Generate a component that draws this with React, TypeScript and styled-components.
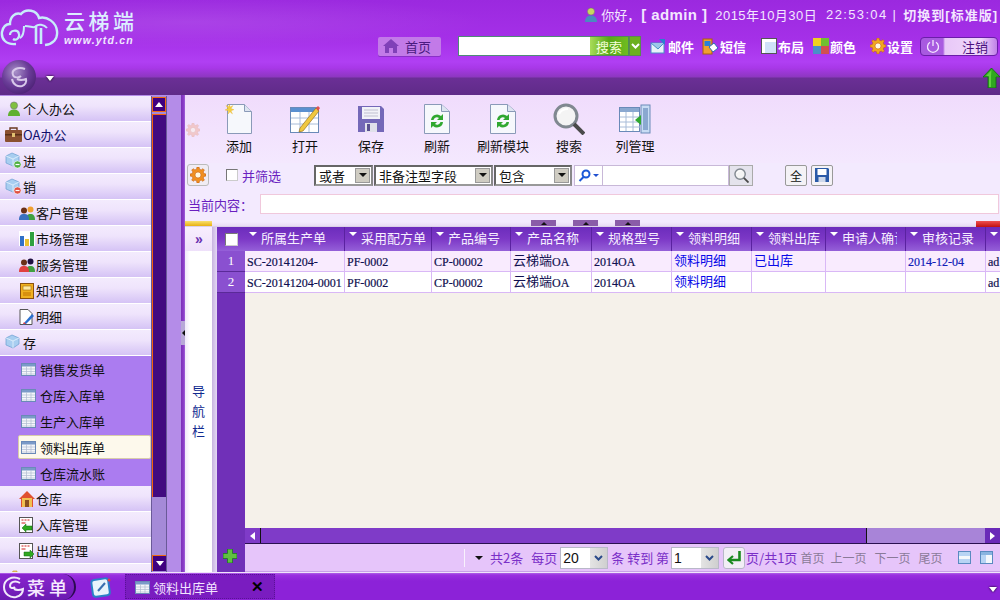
import React from "react";
import styled, { createGlobalStyle } from "styled-components";

const CJK = `"Noto Sans CJK SC", "Liberation Sans", sans-serif`;

const Global = createGlobalStyle`
  html, body { margin: 0; padding: 0; width: 1000px; height: 600px; overflow: hidden; }
  body { font-family: ${CJK}; font-size: 13px; }
  * { box-sizing: border-box; }
`;

const Page = styled.div`
  width: 1000px; height: 600px; display: flex; flex-direction: column; overflow: hidden;
`;

/* ---------- header ---------- */
const Header = styled.header`
  height: 95px; flex: none; display: flex; flex-direction: column;
  background:
    radial-gradient(ellipse 300px 26px at 190px 22px, rgba(255,255,255,.10), rgba(255,255,255,0) 100%),
    linear-gradient(#9b29df 0, #a530e8 40px, #b03ff3 62px, #a838e8 68px, #8d37c0 77px, #6b2f96 78px, #5f2b88 95px);
`;
const TopRow = styled.div`height: 60px; display: flex; flex: none;`;
const Logo = styled.div`width: 378px; flex: none; display: flex; padding: 8px 0 0 0; align-items: flex-start;`;
const LogoText = styled.div`margin-left: 4px; display: flex; flex-direction: column; color: #e8f4ff;`;
const LogoName = styled.span`font-size: 21px; line-height: 24px; letter-spacing: 3.5px; color: #dcefff; font-weight: 500; margin-bottom: 3px;`;
const LogoUrl = styled.span`font: italic bold 10.5px/11px "Liberation Sans", sans-serif; letter-spacing: 1.2px; color: #f0e8ff;`;
const TopRight = styled.div`flex: 1; display: flex; flex-direction: column; position: relative;`;
const InfoLine = styled.div`
  height: 25px; padding-top: 4px; display: flex; align-items: center; justify-content: flex-end; padding-right: 2px;
  color: #f3e6ff; font-size: 13px; white-space: nowrap;
`;
const InfoBold = styled.b<{ $l?: number; $size?: number; $ls?: number }>`
  margin-left: ${p => p.$l ?? 0}px; font-size: ${p => p.$size ?? 13}px; letter-spacing: ${p => p.$ls ?? 0}px;
  font-family: "Liberation Sans", ${CJK}; font-weight: 700;
`;
const InfoPlain = styled.span<{ $l?: number; $ls?: number }>`
  margin-left: ${p => p.$l ?? 0}px; font-family: "Liberation Sans", ${CJK}; letter-spacing: ${p => p.$ls ?? 0.45}px;
`;
const ToolLine = styled.div`height: 24px; margin-top: 9px; display: flex; align-items: center;`;
const HomeBtn = styled.div`
  width: 63px; height: 19px; display: flex; align-items: center; padding-left: 5px; gap: 6px;
  background: #c27ae8; border-radius: 2px; color: #4a1a80; font-size: 13px; box-shadow: 0 1px 0 #8a30c8;
`;
const SearchBox = styled.div`margin-left: 17px; width: 132px; height: 20px; background: #fff; border: 1px solid #4f8a78; border-right: 0;`;
const SearchBtn = styled.div`
  width: 39px; height: 20px; background: linear-gradient(90deg,#a8dc58,#58a818 50%,#70bc20);
  color: #f4ffd8; font-size: 13px; line-height: 19px; text-align: center; border: 1px solid #4f8a58; border-left: 0;
`;
const SearchDrop = styled.div`
  width: 12px; height: 20px; background: #6cb020; border: 1px solid #5a8a50; color: #fff;
  display: flex; align-items: center; justify-content: center;
`;
const ToolLink = styled.div<{ $l: number }>`
  margin-left: ${p => p.$l}px; display: flex; align-items: center; gap: 1px;
  color: #fff; font-size: 13px; font-weight: 700; white-space: nowrap;
`;
const Logout = styled.div`
  margin-left: 7px; width: 78px; height: 19px; border-radius: 4px; border: 1px solid #6a1ea8;
  background: linear-gradient(90deg,#a85ae0 0 22px,#e8c8f8 24px,#f0d8fa 60px,#c080e8);
  display: flex; align-items: center; color: #4a1080; padding-left: 5px;
`;
const LogoutLabel = styled.span`margin-left: 22px;`;
const NavRow = styled.div`flex: 1; display: flex; align-items: flex-start; justify-content: space-between; padding-left: 2px;`;
const Orb = styled.div`
  width: 34px; height: 34px; border-radius: 50%; flex: none; display: flex; align-items: center; justify-content: center;
  background: radial-gradient(circle at 40% 35%, #a890c8 0, #6a3c98 45%, #3a1260 100%);
`;
const NavLeft = styled.div`display: flex; align-items: flex-start;`;
const SmallDown = styled.span<{ $m?: string }>`
  width: 0; height: 0; display: block; margin: ${p => p.$m ?? "0"};
  border-left: 4px solid transparent; border-right: 4px solid transparent; border-top: 5px solid #fff;
  filter: drop-shadow(0 0 1px #000);
`;
const UpArrowWrap = styled.div`margin-top: 8px; height: 20px;`;

/* ---------- body ---------- */
const Body = styled.div`flex: 1; min-height: 0; display: flex;`;
const Side = styled.aside`
  width: 185px; flex: none; display: flex; position: relative; background: #b48ce8; padding-top: 1px;
`;
const Menu = styled.nav`width: 151px; flex: none; overflow: hidden; display: flex; flex-direction: column;`;
const MenuRow = styled.div<{ $sub?: boolean }>`
  height: 26px; flex: none; display: flex; align-items: center;
  padding-left: ${p => (p.$sub ? 18 : 5)}px; gap: 1px;
  background: linear-gradient(#f3ebfd, #efe4fc 40%, #d5c3f5);
  border-bottom: 1px solid #fff; color: #111; font-size: 13px; white-space: nowrap;
`;
const OaText = styled.span`color: #10106a;`;
const IconBox = styled.span`width: 17px; height: 18px; flex: none; display: inline-flex; align-items: center; justify-content: center;`;
const SubBlock = styled.div`height: 130px; flex: none; background: #ab7cf0; display: flex; flex-direction: column;`;
const SubRow = styled.div<{ $active?: boolean }>`
  height: 26px; flex: none; display: flex; align-items: center; padding-left: 3px; gap: 4px; margin-left: 18px;
  color: #111; font-size: 13px;
  ${p => p.$active && `background: #fdf9ec; border: 1px solid #d8ccaa; border-radius: 2px; height: 24px; margin: 1px 0 1px 18px; padding-left: 2px;`}
`;
const Scroll = styled.div`
  width: 16px; flex: none; display: flex; flex-direction: column; background: #a58ad8; height: 476px;
  border-left: 1px solid #6a5a98; border-right: 1px solid #6a5a98;
`;
const ScrollUp = styled.div`
  height: 15px; margin-top: 1px; background: #400080; border: 1px solid #f06a10;
  display: flex; align-items: center; justify-content: center;
`;
const ScrollThumb = styled.div`height: 383px; margin-top: 2px; background: #420a80; border-left: 1px solid #f8600c; border-top: 1px solid #f8600c;`;
const ScrollDown = styled.div`
  height: 16px; margin-top: auto; margin-bottom: 1px; background: #400080; border-left: 1px solid #f06a10; border-top: 1px solid #f06a10;
  display: flex; align-items: center; justify-content: center;
`;
const TriUp = styled.span`
  width: 0; height: 0; border-left: 4px solid transparent; border-right: 4px solid transparent; border-bottom: 5px solid #fff; display: block;
`;
const TriDown = styled.span`
  width: 0; height: 0; border-left: 4px solid transparent; border-right: 4px solid transparent; border-top: 5px solid #fff; display: block;
`;
const SideStrip = styled.div`width: 14px; flex: none;`;
const SideEdge = styled.div`width: 4px; flex: none; background: linear-gradient(90deg,#7a30b8,#8a3cc8 60%,#a060d8); margin-top: -1px;`;
const Collapse = styled.div`
  position: absolute; left: 181px; top: 226px; width: 4px; height: 24px; background: #b8a8d8;
  display: flex; align-items: center; justify-content: flex-end;
`;
const CollapseTri = styled.span`
  width: 0; height: 0; border-top: 3px solid transparent; border-bottom: 3px solid transparent; border-right: 3px solid #111; display: block;
`;

const Main = styled.main`flex: 1; min-width: 0; display: flex; flex-direction: column; background: #f3eafe;`;
const Toolbar = styled.div`
  height: 68px; flex: none; padding-top: 8px; display: flex; align-items: flex-start;
  background: linear-gradient(#f0dcfc, #f4e8fe);
`;
const PaleGear = styled.div`width: 21px; flex: none; padding: 19px 0 0 1px; opacity: .4;`;
const ToolBtn = styled.div`
  width: 66px; flex: none; display: flex; flex-direction: column; align-items: center; color: #111; font-size: 13px; white-space: nowrap;
`;
const ToolIcon = styled.div`height: 32px; display: flex; align-items: center; justify-content: center; margin-bottom: 1px;`;
const FilterRow = styled.div`height: 24px; margin-top: 0; display: flex; align-items: center; padding-left: 2px;`;
const GearBtn = styled.div`
  width: 22px; height: 22px; border: 1px solid #bbb; border-radius: 3px; background: #f0ecf4;
  display: flex; align-items: center; justify-content: center;
`;
const Check = styled.span<{ $m?: string; $size?: number }>`
  width: ${p => p.$size ?? 12}px; height: ${p => p.$size ?? 12}px; margin: ${p => p.$m ?? "0"}; flex: none; display: block;
  background: #fff; border: 1px solid #777; border-right-color: #ccc; border-bottom-color: #ccc;
`;
const PurpleText = styled.span`color: #6a1fc0; font-size: 13px; white-space: nowrap;`;
const FakeSelect = styled.div<{ $w: number; $m?: number }>`
  width: ${p => p.$w}px; height: 21px; margin-left: ${p => p.$m ?? 0}px; flex: none; display: flex; align-items: center;
  background: #fff; border: 2px solid #666; border-right-color: #888; border-bottom-color: #999; padding-left: 3px; color: #111; font-size: 13px;
  justify-content: space-between; white-space: nowrap;
`;
const SelectBtn = styled.span`
  width: 15px; height: 15px; margin-right: 1px; background: #cfccc2; border: 1px solid #999; display: flex; align-items: center; justify-content: center;
`;
const TriBlack = styled.span`
  width: 0; height: 0; border-left: 4px solid transparent; border-right: 4px solid transparent; border-top: 4px solid #111; display: block;
`;
const FieldBtn = styled.div`
  width: 29px; height: 21px; margin-left: 2px; background: #fff; border: 1px solid #c8b8d8; display: flex; align-items: center; justify-content: center; gap: 2px;
`;
const TriBlue = styled.span`
  width: 0; height: 0; border-left: 3px solid transparent; border-right: 3px solid transparent; border-top: 3px solid #2050d0; display: block;
`;
const FieldInput = styled.div`width: 126px; height: 21px; background: #fff; border: 1px solid #c8b8d8; border-left: 0;`;
const FindBtn = styled.div`
  width: 24px; height: 21px; background: #e4e3ec; border: 1px solid #aaa; display: flex; align-items: center; justify-content: center;
`;
const SmallBtn = styled.div<{ $m: number }>`
  width: 22px; height: 21px; margin-left: ${p => p.$m}px; background: #f4f2f6; border: 1px solid #999; border-radius: 2px;
  display: flex; align-items: center; justify-content: center; color: #111; font-size: 12px;
`;
const ContentRow = styled.div`height: 20px; margin-top: 7px; display: flex; align-items: center; padding-left: 3px;`;
const ContentLabel = styled.span`width: 72px; flex: none; color: #6a1fc0; font-size: 13px;`;
const ContentInput = styled.div`width: 739px; height: 20px; background: #fff; border: 1px solid #f0c8dc;`;
const Divider = styled.div`
  height: 13px; flex: none; margin-top: 0; display: flex; align-items: flex-start; padding-top: 6px;
  background: linear-gradient(#f3eafe 0 8px, #e8dcf4 12px, #cfc4dc 13px);
`;
const YellowTab = styled.div`width: 27px; height: 5px; margin-top: 1px; background: linear-gradient(#f8e070,#e8b010);`;
const PurpleTab = styled.div<{ $m: number }>`
  width: 25px; height: 6px; margin-left: ${p => p.$m}px; background: #8a5ca8; display: flex; justify-content: center; align-items: flex-start;
`;
const TriMini = styled.span`
  width: 0; height: 0; border-left: 3px solid transparent; border-right: 3px solid transparent; border-bottom: 3px solid #111; display: block; margin-top: 2px;
`;
const RedTab = styled.div`width: 24px; height: 6px; margin-left: auto; margin-top: 1px; background: linear-gradient(#f05050,#c01010);`;

const GridRegion = styled.div`flex: 1; min-height: 0; display: flex;`;
const NavRail = styled.div`width: 27px; flex: none; display: flex; flex-direction: column; background: #fff;`;
const RailTop = styled.div`
  height: 24px; flex: none; background: linear-gradient(#f8eefe,#eee0fa); color: #6a30b0; font-size: 14px; font-weight: 700;
  display: flex; align-items: center; justify-content: center; font-family: "Liberation Sans", sans-serif; letter-spacing: -1px;
`;
const RailBody = styled.div`
  flex: 1; display: flex; flex-direction: column; align-items: center; justify-content: center; gap: 7px; padding-bottom: 3px;
  color: #102a90; font-size: 13px; line-height: 13px;
  background: linear-gradient(90deg,#f0e8fa,#fff 5px,#fff);
`;
const RailStrip = styled.div`width: 5px; flex: none; background: linear-gradient(90deg,#c8b4e0,#e4d8f4);`;
const RowHeads = styled.div`width: 28px; flex: none; display: flex; flex-direction: column; background: #7030b8;`;
const CornerHead = styled.div`
  height: 24px; flex: none; display: flex; align-items: center; justify-content: center;
  background: linear-gradient(#6c2cbc,#7c38c6 50%,#9560d8);
`;
const RowNum = styled.div`
  height: 21px; flex: none; background: #8a50d0; color: #fff; text-align: center;
  font: 13px/20px "Liberation Serif", serif; border-bottom: 1px solid #5a2a98;
`;
const PlusWrap = styled.div`margin-top: auto; padding: 0 0 4px 6px; height: 24px;`;
const GridMain = styled.div`flex: 1; min-width: 0; display: flex; flex-direction: column;`;
const Sheet = styled.table`
  border-collapse: separate; border-spacing: 0; table-layout: fixed; width: 780px; flex: none;
`;
const SheetWrap = styled.div`flex: 1; min-height: 0; overflow: hidden; background: #f5f1ea;`;
const Th = styled.th`
  height: 24px; padding: 0 0 4px 4px; text-align: left; font-weight: 400; color: #f6efff; font-size: 13px; white-space: nowrap; overflow: hidden;
  background: linear-gradient(#6c2cbc,#7c38c6 50%,#9560d8); border-right: 1px solid #5a22a0;
`;
const ThInner = styled.span`display: flex; align-items: center; gap: 4px;`;
const ThLabel = styled.span<{ $clip?: boolean }>`
  display: block; overflow: hidden; ${p => p.$clip && "max-width: 55px;"}
`;
const ThTri = styled.span`
  width: 0; height: 0; border-left: 4px solid transparent; border-right: 4px solid transparent; border-top: 4px solid #fff; display: block; flex: none; margin-top: -7px;
`;
const Td = styled.td<{ $odd?: boolean; $link?: boolean; $date?: boolean }>`
  height: 21px; padding: 1px 0 0 2px; white-space: nowrap; overflow: hidden; line-height: 14px;
  font-family: "Liberation Serif", ${CJK}, serif; font-size: 12px;
  -webkit-text-stroke: .2px currentColor;
  color: ${p => (p.$link ? "#0808e8" : p.$date ? "#1020b8" : "#101050")};
  background: ${p => (p.$odd ? "#f9ebfe" : "#fff")};
  border-right: 1px solid #d9b8f6; border-bottom: 1px solid #d9b8f6;
`;
const CjkCell = styled.span`
  font: 13px/14px ${CJK}; -webkit-text-stroke: 0; position: relative; top: -1px;
`;
const HScroll = styled.div`height: 16px; flex: none; display: flex; background: #7f3bc8; border-bottom: 1px solid #2a1050;`;
const HBtn = styled.div<{ $bg?: string }>`
  width: 15px; flex: none; background: ${p => p.$bg ?? "#7f3bc8"}; display: flex; align-items: center; justify-content: center;
`;
const HTrack = styled.div`flex: 1; border-left: 1px solid #111;`;
const HLight = styled.div`width: 119px; flex: none; background: #a884d8; border-left: 1px solid #111;`;
const TriL = styled.span`width: 0; height: 0; border-top: 4px solid transparent; border-bottom: 4px solid transparent; border-right: 5px solid #fff; display: block;`;
const TriR = styled.span`width: 0; height: 0; border-top: 4px solid transparent; border-bottom: 4px solid transparent; border-left: 5px solid #fff; display: block;`;
const Pager = styled.div`
  height: 28px; flex: none; display: flex; align-items: center; background: #e6c5fa; padding-left: 219px;
  color: #7a2fc8; font-size: 13px; white-space: nowrap; border-bottom: 1px solid #c8a0e8;
`;
const PagerSep = styled.span`width: 1px; height: 18px; background: #f8f2fc;`;
const PagerTri = styled.span`
  width: 0; height: 0; margin: 0 7px 0 10px; border-left: 4px solid transparent; border-right: 4px solid transparent; border-top: 4px solid #111; display: block;
`;
const PagerText = styled.span<{ $l?: number; $grey?: boolean }>`
  margin-left: ${p => p.$l ?? 0}px; color: ${p => (p.$grey ? "#8a7a98" : "#7a2fc8")}; font-family: ${CJK};
  font-size: ${p => (p.$grey ? 12 : 13)}px;
`;
const PagerSelect = styled.div<{ $w: number; $l?: number }>`
  width: ${p => p.$w}px; height: 22px; margin-left: ${p => p.$l ?? 0}px; flex: none; background: #fff; border: 1px solid #b8b8c8;
  display: flex; align-items: center; justify-content: space-between; color: #111; font: 14px "Liberation Sans", sans-serif; padding-left: 2px;
`;
const PagerDrop = styled.span`
  width: 17px; height: 100%; background: linear-gradient(90deg,#e4e4e4,#cfcfcf); display: flex; align-items: center; justify-content: center;
`;
const EnterBtn = styled.div`
  width: 22px; height: 22px; margin: 0 1px 0 4px; flex: none; border: 1px solid #b8b8c8; border-radius: 3px; background: #f2eef6;
  display: flex; align-items: center; justify-content: center;
`;
const PagerIcon = styled.span<{ $l: number }>`margin-left: ${p => p.$l}px; display: flex;`;

/* ---------- bottom ---------- */
const Footer = styled.footer`
  height: 28px; flex: none; display: flex; align-items: center; position: relative;
  background: linear-gradient(#b060e8 0, #9a30e0 2px, #8c22d8 8px, #8c22d8);
  border-top: 1px solid #f0e4fa;
`;
const StartBtn = styled.div`
  width: 76px; height: 26px; flex: none; display: flex; align-items: center; gap: 1px; padding-left: 2px;
  background: linear-gradient(#8a24d0,#6a1ab0); border-radius: 0 13px 13px 0; border-right: 2px solid #2a0a50;
  color: #f6eaff; font-size: 18px; font-weight: 500; letter-spacing: 4px; white-space: nowrap;
`;
const QuickIcon = styled.div`margin-left: 14px; width: 24px; flex: none; display: flex;`;
const TaskTab = styled.div`
  margin-left: 11px; width: 150px; height: 25px; flex: none; display: flex; align-items: center; gap: 3px; padding-left: 9px;
  background: #7a1cc0; border: 1px dotted #5a1098; color: #f3e4ff; font-size: 13px; padding-top: 1px;
`;
const TaskClose = styled.b`margin-left: auto; margin-right: 10px; color: #000; font: bold 15px "Liberation Sans", sans-serif;`;
const FootDown = styled.div`margin-left: auto; margin-right: 3px; margin-top: 6px;`;

/* ---------- svg icons ---------- */
const CloudLogo = () => (
  <svg width="60" height="40" viewBox="0 0 60 40" fill="none" stroke="#c8ecfa" strokeWidth="2.4">
    <path d="M16 36C6 37 1 31 2 24 3 19 6 16 10 16 10 9 15 4 21 6 26 0 37 2 39 10 47 8 56 14 57 23 58 31 53 36 45 37" />
    <path d="M10 27c0-5 8-6 9-1 1 4-3 7-6 5" strokeWidth="2.2" />
    <path d="M20 30c4-2 4-9 4-12M25 18c6 0 9 3 11 0 2-2 8-2 11 2" strokeWidth="2" />
    <path d="M36 18v18M41 20v16" strokeWidth="2.6" />
  </svg>
);
const Person = ({ c = "#8cc850", b = "#3a8ac8" }: { c?: string; b?: string }) => (
  <svg width="14" height="16" viewBox="0 0 14 16">
    <circle cx="7" cy="4.5" r="3.6" fill={c} stroke="#667" strokeWidth=".5" />
    <path d="M1 15c0-5 3-6.5 6-6.5s6 1.5 6 6.5z" fill={b} />
  </svg>
);
const HomeGlyph = () => (
  <svg width="16" height="14" viewBox="0 0 16 14" fill="#8040b8"><path d="M8 0 0 7h2v7h4V9h4v5h4V7h2z" /></svg>
);
const MailIcon = () => (
  <svg width="17" height="17" viewBox="0 0 17 17"><rect x="1" y="5" width="13" height="10" fill="#e8f2fa" stroke="#4a90c8" /><path d="M1 5l7 6 6-6" fill="#9cc8e8" stroke="#4a90c8" /><path d="M9 1h6v6z" fill="#2a80d0" /></svg>
);
const SmsIcon = () => (
  <svg width="17" height="17" viewBox="0 0 17 17"><rect x="1" y="1" width="9" height="15" fill="#f0a030" stroke="#a86010" /><rect x="2.5" y="3" width="6" height="5" fill="#2a80d8" /><path d="M7 9l5-4 4 5-5 4z" fill="#fff" stroke="#2a70b8" /></svg>
);
const LayoutIcon = () => (
  <svg width="16" height="16" viewBox="0 0 16 16"><rect x=".5" y=".5" width="15" height="15" fill="#cfe2f8" stroke="#555" /><path d="M1 1h14v3H1zM1 4h3v11H1z" fill="#fff" /></svg>
);
const ColorIcon = () => (
  <svg width="16" height="16" viewBox="0 0 16 16"><rect width="8" height="8" fill="#f0d020" /><rect x="8" width="8" height="8" fill="#70c030" /><rect y="8" width="8" height="8" fill="#4a90c8" /><rect x="8" y="8" width="8" height="8" fill="#d05050" /></svg>
);
const Gear = ({ size = 16, c = "#f0a820", d = "#c86010" }: { size?: number; c?: string; d?: string }) => (
  <svg width={size} height={size} viewBox="0 0 16 16">
    <path d="M7 0h2l.5 2.2 1.7.7L13 1.7l1.4 1.4-1.2 1.8.7 1.7L16 7v2l-2.1.4-.7 1.7 1.2 1.8-1.4 1.4-1.8-1.2-1.7.7L9 16H7l-.4-2.2-1.7-.7-1.8 1.2-1.4-1.4 1.2-1.8-.7-1.7L0 9V7l2.2-.4.7-1.7L1.7 3.1l1.4-1.4 1.8 1.2 1.7-.7z" fill={c} stroke={d} strokeWidth=".6" />
    <circle cx="8" cy="8" r="3" fill="#fff8e0" stroke={d} strokeWidth=".6" />
  </svg>
);
const PowerIcon = () => (
  <svg width="14" height="14" viewBox="0 0 14 14" fill="none" stroke="#f4e6ff" strokeWidth="1.3"><path d="M4 3.2a5.5 5.5 0 1 0 6 0M7 1v6" /></svg>
);
const OrbGlyph = () => (
  <svg width="22" height="24" viewBox="0 0 22 24" fill="none" stroke="#d8c8ea" strokeWidth="2"><path d="M17 4C10 1 3 5 5 10c1 3 6 3 8 1" /><path d="M4 14c1 6 6 8 10 7 3-1 5-4 4-7-3 1-7 1-9 0" /></svg>
);
const GreenUp = () => (
  <svg width="17" height="20" viewBox="0 0 17 20"><path d="M8.5 0 17 9h-4v11H5V9H0z" fill="#30a820" stroke="#0c6c10" strokeWidth=".8" /><path d="M8.5 2 3 8h3v11h2V8z" fill="#60d040" /></svg>
);
const SmDown = ({ c = "#2a4a8a" }: { c?: string }) => (
  <svg width="9" height="6" viewBox="0 0 9 6" fill="none" stroke={c} strokeWidth="2"><path d="M1 1l3.5 3.5L8 1" /></svg>
);

const CubeIcon = ({ badge }: { badge?: string }) => (
  <svg width="17" height="17" viewBox="0 0 17 17">
    <path d="M1 4l6-3 7 3v6l-6 4-7-3z" fill="#a8cef0" stroke="#6a9ed0" strokeWidth=".7" />
    <path d="M1 4l7 3 6-3M8 7v7" stroke="#e6f3fc" strokeWidth=".8" fill="none" />
    {badge && <circle cx="12.5" cy="12.5" r="3.6" fill={badge} stroke="#fff" strokeWidth=".6" />}
    {badge && <path d="M10.5 12.5h4" stroke="#fff" strokeWidth="1.2" />}
  </svg>
);
const BriefIcon = () => (
  <svg width="17" height="15" viewBox="0 0 17 15"><rect x="0" y="3" width="17" height="12" rx="1" fill="#8a5030" /><path d="M5 3V1h7v2" fill="none" stroke="#6a3a20" strokeWidth="1.4" /><rect x="0" y="7" width="17" height="1.5" fill="#5a3018" /><rect x="7" y="6" width="3" height="4" fill="#e0c070" /></svg>
);
const PeopleIcon = ({ a = "#f0a030", b = "#3a70c0" }: { a?: string; b?: string }) => (
  <svg width="16" height="14" viewBox="0 0 16 14">
    <circle cx="11.5" cy="3.5" r="3" fill={a} /><path d="M7 14c0-5 2-6 4.5-6s4.5 1 4.5 6z" fill="#40a040" />
    <circle cx="5" cy="4.5" r="3" fill="#6a3018" /><path d="M0 14c0-5 2-6 5-6s5 1 5 6z" fill={b} />
  </svg>
);
const ChartIcon = () => (
  <svg width="16" height="15" viewBox="0 0 16 15"><rect width="16" height="15" fill="#fff" /><rect x="1" y="5" width="4" height="10" fill="#3070c8" /><rect x="6" y="8" width="4" height="7" fill="#e8c030" /><rect x="11" y="1" width="4" height="14" fill="#30a040" /></svg>
);
const BookIcon = () => (
  <svg width="14" height="16" viewBox="0 0 14 16"><rect x=".5" y=".5" width="13" height="15" fill="#f0b020" stroke="#8a5010" /><rect x="3" y="3" width="8" height="4" fill="#fde8a0" stroke="#a06a10" strokeWidth=".6" /><rect x="3" y="9" width="8" height="4" fill="#d89010" /></svg>
);
const NoteIcon = () => (
  <svg width="16" height="16" viewBox="0 0 16 16"><path d="M1 .5h8l4 4v11H1z" fill="#fff" stroke="#555" /><path d="M5 14l8-9 2 2-8 8-3 1z" fill="#2a70d0" /><path d="M4 15l1-2 2 2z" fill="#e04040" /></svg>
);
const HouseIcon = () => (
  <svg width="16" height="16" viewBox="0 0 16 16"><path d="M8 0 0 8h2v8h12V8h2z" fill="#e05030" /><rect x="3" y="7" width="10" height="9" fill="#f0c050" /><rect x="6" y="9" width="4" height="7" fill="#8a5020" /></svg>
);
const DocArrow = () => (
  <svg width="15" height="16" viewBox="0 0 15 16"><rect x=".5" y=".5" width="13" height="15" fill="#fff" stroke="#555" /><path d="M2.5 3h2M5.5 3h2M8.5 3h2M2.5 6h4" stroke="#d02020" strokeWidth="1.2" /><path d="M3 11l4-4v2h6v4H7v2z" fill="#30a820" stroke="#0c6c10" strokeWidth=".5" /></svg>
);
const DocArrowOut = () => (
  <svg width="15" height="16" viewBox="0 0 15 16"><rect x=".5" y=".5" width="13" height="15" fill="#fff" stroke="#555" /><path d="M2.5 3h2M5.5 3h2M8.5 3h2M2.5 6h4" stroke="#d02020" strokeWidth="1.2" /><path d="M15 11l-4-4v2H5v4h6v2z" fill="#30a820" stroke="#0c6c10" strokeWidth=".5" /></svg>
);
const SheetIcon = () => (
  <svg width="15" height="13" viewBox="0 0 15 13">
    <rect x=".5" y=".5" width="14" height="12" fill="#f4f6fa" stroke="#6a8ab8" />
    <rect x="1" y="1" width="13" height="2.5" fill="#7a9ac8" />
    <path d="M1 6h13M1 8.5h13M1 11h13M5.5 3.5V12M10 3.5V12" stroke="#b0bcd0" strokeWidth=".7" />
  </svg>
);
const FolderIcon = () => (
  <svg width="16" height="14" viewBox="0 0 16 14"><path d="M1 3h5l1-2h4v2h4v11H1z" fill="#f0c860" stroke="#c09020" strokeWidth=".6" /></svg>
);

const NewDoc = () => (
  <svg width="28" height="30" viewBox="0 0 28 30"><path d="M2.5.5h17l7 7v22h-24z" fill="#f6f8fc" stroke="#8a9ab8" /><path d="M19.5.5v7h7" fill="#dde4f0" stroke="#8a9ab8" /><path d="M4 0l1.2 3L8 1.5 6 4.5l3 1.2-3 1L7.5 10 5 7.8 3 10l.6-3.3L0 6l3-1.6L1 1.5l3 1.2z" fill="#f4d040" stroke="#e8a820" strokeWidth=".3" /></svg>
);
const EditTable = () => (
  <svg width="30" height="30" viewBox="0 0 30 30"><rect x=".5" y="3.5" width="28" height="25" fill="#fff" stroke="#6a8ab8" /><rect x="1" y="4" width="27" height="4" fill="#5a90d0" /><path d="M1 14h27M1 20h27M10 8v20M19 8v20" stroke="#a8bcd8" /><path d="M10 24l-1 4 4-1L29 7l-3-3z" fill="#f0c840" stroke="#8a6010" strokeWidth=".6" /><path d="M26 4l2-2 2 2-2 3z" fill="#e05050" /></svg>
);
const Floppy = () => (
  <svg width="26" height="26" viewBox="0 0 26 26"><path d="M0 0h23l3 3v23H0z" fill="#7468b8" /><rect x="4" y="1" width="18" height="12" fill="#f2f2f8" /><path d="M6 4h14M6 7h14M6 10h14" stroke="#c0c0d0" /><rect x="7" y="17" width="12" height="9" fill="#e0e0ea" /><rect x="9" y="18" width="3" height="7" fill="#5a5090" /></svg>
);
const RefreshDoc = () => (
  <svg width="26" height="30" viewBox="0 0 26 30"><path d="M.5.5h17l8 7v22H.5z" fill="#f6f8fc" stroke="#8a9ab8" /><path d="M17.5.5v7h8" fill="#dde4f0" stroke="#8a9ab8" /><path d="M7 16a6 6 0 0 1 10-4l2-2v6h-6l2-2a3.5 3.5 0 0 0-5.5 2zM19 18a6 6 0 0 1-10 4l-2 2v-6h6l-2 2a3.5 3.5 0 0 0 5.5-2z" fill="#30a830" /></svg>
);
const Lens = ({ size = 32 }: { size?: number }) => (
  <svg width={size} height={size} viewBox="0 0 32 32"><circle cx="13" cy="13" r="11" fill="#f4f4f4" stroke="#808890" strokeWidth="3" /><path d="M6 11c2-4 6-5 9-5" stroke="#fff" strokeWidth="2" fill="none" /><path d="M21 21l10 10" stroke="#4a4a4a" strokeWidth="4" /></svg>
);
const Columns = () => (
  <svg width="32" height="30" viewBox="0 0 32 30"><rect x=".5" y="3.5" width="20" height="24" fill="#fff" stroke="#6a8ab8" /><rect x="1" y="4" width="19" height="4" fill="#8aa8d0" /><path d="M1 13h20M1 18h20M1 23h20M7 8v19M14 8v19" stroke="#a8bcd8" /><rect x="22" y="1" width="9" height="28" fill="#c8dcf4" stroke="#6a8ab8" /><rect x="24" y="4" width="5" height="22" fill="#8aa8d0" /><path d="M22 11l-6 5 6 5z" fill="#30a830" /></svg>
);
const BlueLens = () => (
  <svg width="13" height="13" viewBox="0 0 13 13" fill="none" stroke="#1a58d8" strokeWidth="2"><circle cx="8" cy="5" r="3.5" /><path d="M5.5 8 1.5 12" /></svg>
);
const SaveSmall = () => (
  <svg width="14" height="14" viewBox="0 0 14 14"><path d="M0 0h13l1 1v13H0z" fill="#2a5aa8" /><rect x="2.5" y="1" width="9" height="6" fill="#fff" /><rect x="3.5" y="9" width="7" height="5" fill="#cdd8ea" /></svg>
);
const PlusIcon = () => (
  <svg width="14" height="14" viewBox="0 0 14 14"><path d="M4.5 0h5v4.5H14v5H9.5V14h-5V9.5H0v-5h4.5z" fill="#60c040" stroke="#1a7a20" strokeWidth=".8" /></svg>
);
const EnterIcon = () => (
  <svg width="15" height="15" viewBox="0 0 15 15" fill="none" stroke="#1a8a20" strokeWidth="2.6"><path d="M12.5 1v9H3" /><path d="M6 6l-4.5 4L6 14" strokeWidth="2.2" /></svg>
);
const PagerGrid = () => (
  <svg width="13" height="13" viewBox="0 0 13 13"><rect x=".5" y=".5" width="12" height="12" fill="#b8d4f4" stroke="#5a8ac0" /><rect x="1" y="5" width="11" height="3" fill="#f4f8fc" /></svg>
);
const PagerSplit = () => (
  <svg width="13" height="13" viewBox="0 0 13 13"><rect x=".5" y=".5" width="12" height="12" fill="#f4f8fc" stroke="#5a8ac0" /><rect x="1" y="1" width="11" height="3" fill="#8ab4e0" /><rect x="1" y="4" width="5" height="8" fill="#b8d4f4" /></svg>
);
const MenuSwirl = () => (
  <svg width="24" height="24" viewBox="0 0 24 24" fill="none" stroke="#f0e8fa" strokeWidth="2"><path d="M18 4C10 0 2 5 2 12s6 11 12 10c4-1 7-4 7-8-3 1-7 1-9 0M18 8c-5-3-10-1-10 3 0 2 3 3 5 1" /></svg>
);
const QuickGlyph = () => (
  <svg width="22" height="22" viewBox="0 0 22 22"><rect x="2" y="3" width="17" height="17" rx="3" fill="#e8f4fc" stroke="#2a80c8" strokeWidth="2" transform="rotate(-8 11 11)" /><path d="M8 15l7-8" stroke="#3a70b0" strokeWidth="2" /><circle cx="19" cy="4" r="1.5" fill="#e04040" /></svg>
);

const cols = [100, 87, 79, 81, 80, 80, 74, 80, 80, 40];
const heads = ["所属生产单", "采用配方单", "产品编号", "产品名称", "规格型号", "领料明细", "领料出库", "申请人确认", "审核记录", ""];

const tools: [string, React.ReactNode][] = [
  ["添加", <NewDoc />], ["打开", <EditTable />], ["保存", <Floppy />], ["刷新", <RefreshDoc />],
  ["刷新模块", <RefreshDoc />], ["搜索", <Lens />], ["列管理", <Columns />],
];

const subs = ["销售发货单", "仓库入库单", "生产入库单", "领料出库单", "仓库流水账"];

export default function App() {
  return (
    <Page>
      <Global />
      <Header>
        <TopRow>
          <Logo>
            <CloudLogo />
            <LogoText>
              <LogoName>云梯端</LogoName>
              <LogoUrl>www.ytd.cn</LogoUrl>
            </LogoText>
          </Logo>
          <TopRight>
            <InfoLine>
              <Person c="#c8d860" b="#4a8ac0" />
              <InfoPlain $l={3} $ls={0}>你好，</InfoPlain>
              <InfoBold $l={1} $size={15} $ls={0.4}>[ admin ]</InfoBold>
              <InfoPlain $l={8}>2015年10月30日</InfoPlain>
              <InfoPlain $l={9} $ls={1.35}>22:53:04</InfoPlain>
              <InfoPlain $l={5}>|</InfoPlain>
              <InfoBold $l={7} $ls={1}>切换到[标准版]</InfoBold>
            </InfoLine>
            <ToolLine>
              <HomeBtn><HomeGlyph /><span>首页</span></HomeBtn>
              <SearchBox />
              <SearchBtn>搜索</SearchBtn>
              <SearchDrop><SmDown c="#fff" /></SearchDrop>
              <ToolLink $l={9}><MailIcon />邮件</ToolLink>
              <ToolLink $l={8}><SmsIcon />短信</ToolLink>
              <ToolLink $l={15}><LayoutIcon />布局</ToolLink>
              <ToolLink $l={9}><ColorIcon />颜色</ToolLink>
              <ToolLink $l={14}><Gear />设置</ToolLink>
              <Logout><PowerIcon /><LogoutLabel>注销</LogoutLabel></Logout>
            </ToolLine>
          </TopRight>
        </TopRow>
        <NavRow>
          <NavLeft>
            <Orb><OrbGlyph /></Orb>
            <SmallDown $m="16px 0 0 10px" />
          </NavLeft>
          <UpArrowWrap><GreenUp /></UpArrowWrap>
        </NavRow>
      </Header>

      <Body>
        <Side>
          <Menu>
            <MenuRow><IconBox><Person c="#80c040" b="#60b030" /></IconBox> 个人办公</MenuRow>
            <MenuRow><IconBox><BriefIcon /></IconBox><OaText>OA办公</OaText></MenuRow>
            <MenuRow><IconBox><CubeIcon badge="#50b040" /></IconBox>进</MenuRow>
            <MenuRow><IconBox><CubeIcon badge="#e05040" /></IconBox>销</MenuRow>
            <MenuRow $sub><IconBox><PeopleIcon /></IconBox>客户管理</MenuRow>
            <MenuRow $sub><IconBox><ChartIcon /></IconBox>市场管理</MenuRow>
            <MenuRow $sub><IconBox><PeopleIcon a="#201040" b="#e04040" /></IconBox>服务管理</MenuRow>
            <MenuRow $sub><IconBox><BookIcon /></IconBox> 知识管理</MenuRow>
            <MenuRow $sub><IconBox><NoteIcon /></IconBox>明细</MenuRow>
            <MenuRow><IconBox><CubeIcon /></IconBox>存</MenuRow>
            <SubBlock>
              {subs.map((s, i) => (
                <SubRow key={s} $active={i === 3}><SheetIcon />{s}</SubRow>
              ))}
            </SubBlock>
            <MenuRow $sub><IconBox><HouseIcon /></IconBox>仓库</MenuRow>
            <MenuRow $sub><IconBox><DocArrow /></IconBox>入库管理</MenuRow>
            <MenuRow $sub><IconBox><DocArrowOut /></IconBox>出库管理</MenuRow>
            <MenuRow><IconBox><FolderIcon /></IconBox></MenuRow>
          </Menu>
          <Scroll>
            <ScrollUp><TriUp /></ScrollUp>
            <ScrollThumb />
            <ScrollDown><TriDown /></ScrollDown>
          </Scroll>
          <SideStrip />
          <SideEdge />
          <Collapse><CollapseTri /></Collapse>
        </Side>

        <Main>
          <Toolbar>
            <PaleGear><Gear size={14} c="#f0a080" d="#d08060" /></PaleGear>
            {tools.map(([label, icon]) => (
              <ToolBtn key={label}>
                <ToolIcon>{icon}</ToolIcon>
                {label}
              </ToolBtn>
            ))}
          </Toolbar>
          <FilterRow>
            <GearBtn><Gear size={16} c="#f09020" d="#c86010" /></GearBtn>
            <Check $m="0 4px 0 17px" />
            <PurpleText>并筛选</PurpleText>
            <FakeSelect $w={59} $m={33}>或者<SelectBtn><TriBlack /></SelectBtn></FakeSelect>
            <FakeSelect $w={119} $m={1}>非备注型字段<SelectBtn><TriBlack /></SelectBtn></FakeSelect>
            <FakeSelect $w={78} $m={1}>包含<SelectBtn><TriBlack /></SelectBtn></FakeSelect>
            <FieldBtn><BlueLens /><TriBlue /></FieldBtn>
            <FieldInput />
            <FindBtn><Lens size={15} /></FindBtn>
            <SmallBtn $m={32}>全</SmallBtn>
            <SmallBtn $m={4}><SaveSmall /></SmallBtn>
          </FilterRow>
          <ContentRow>
            <ContentLabel>当前内容：</ContentLabel>
            <ContentInput />
          </ContentRow>
          <Divider>
            <YellowTab />
            <PurpleTab $m={319}><TriMini /></PurpleTab>
            <PurpleTab $m={17}><TriMini /></PurpleTab>
            <PurpleTab $m={17}><TriMini /></PurpleTab>
            <RedTab />
          </Divider>
          <GridRegion>
            <NavRail>
              <RailTop>»</RailTop>
              <RailBody><span>导</span><span>航</span><span>栏</span></RailBody>
            </NavRail>
            <RailStrip />
            <RowHeads>
              <CornerHead><Check $size={13} /></CornerHead>
              <RowNum>1</RowNum>
              <RowNum>2</RowNum>
              <PlusWrap><PlusIcon /></PlusWrap>
            </RowHeads>
            <GridMain>
              <SheetWrap>
                <Sheet>
                  <colgroup>
                    {cols.map((w, i) => <col key={i} width={w} />)}
                  </colgroup>
                  <thead>
                    <tr>
                      {heads.map((h, i) => (
                        <Th key={i}><ThInner><ThTri /><ThLabel $clip={i === 7}>{h}</ThLabel></ThInner></Th>
                      ))}
                    </tr>
                  </thead>
                  <tbody>
                    <tr>
                      <Td $odd>SC-20141204-</Td>
                      <Td $odd>PF-0002</Td>
                      <Td $odd>CP-00002</Td>
                      <Td $odd><CjkCell>云梯端</CjkCell>OA</Td>
                      <Td $odd>2014OA</Td>
                      <Td $odd $link><CjkCell>领料明细</CjkCell></Td>
                      <Td $odd $link><CjkCell>已出库</CjkCell></Td>
                      <Td $odd />
                      <Td $odd $date>2014-12-04</Td>
                      <Td $odd>ad</Td>
                    </tr>
                    <tr>
                      <Td>SC-20141204-0001</Td>
                      <Td>PF-0002</Td>
                      <Td>CP-00002</Td>
                      <Td><CjkCell>云梯端</CjkCell>OA</Td>
                      <Td>2014OA</Td>
                      <Td $link><CjkCell>领料明细</CjkCell></Td>
                      <Td />
                      <Td />
                      <Td />
                      <Td>ad</Td>
                    </tr>
                  </tbody>
                </Sheet>
              </SheetWrap>
              <HScroll>
                <HBtn><TriL /></HBtn>
                <HTrack />
                <HLight />
                <HBtn $bg="#6a2ab8"><TriR /></HBtn>
              </HScroll>
              <Pager>
                <PagerSep />
                <PagerTri />
                <PagerText>共2条</PagerText>
                <PagerText $l={8}>每页</PagerText>
                <PagerSelect $w={48} $l={3}>20<PagerDrop><SmDown /></PagerDrop></PagerSelect>
                <PagerText $l={3}>条 转到 第</PagerText>
                <PagerSelect $w={48} $l={2}>1<PagerDrop><SmDown /></PagerDrop></PagerSelect>
                <EnterBtn><EnterIcon /></EnterBtn>
                <PagerText>页/共1页</PagerText>
                <PagerText $l={3} $grey>首页</PagerText>
                <PagerText $l={6} $grey>上一页</PagerText>
                <PagerText $l={8} $grey>下一页</PagerText>
                <PagerText $l={8} $grey>尾页</PagerText>
                <PagerIcon $l={16}><PagerGrid /></PagerIcon>
                <PagerIcon $l={9}><PagerSplit /></PagerIcon>
              </Pager>
            </GridMain>
          </GridRegion>
        </Main>
      </Body>

      <Footer>
        <StartBtn><MenuSwirl />菜单</StartBtn>
        <QuickIcon><QuickGlyph /></QuickIcon>
        <TaskTab><SheetIcon />领料出库单<TaskClose>✕</TaskClose></TaskTab>
        <FootDown><SmallDown /></FootDown>
      </Footer>
    </Page>
  );
}
